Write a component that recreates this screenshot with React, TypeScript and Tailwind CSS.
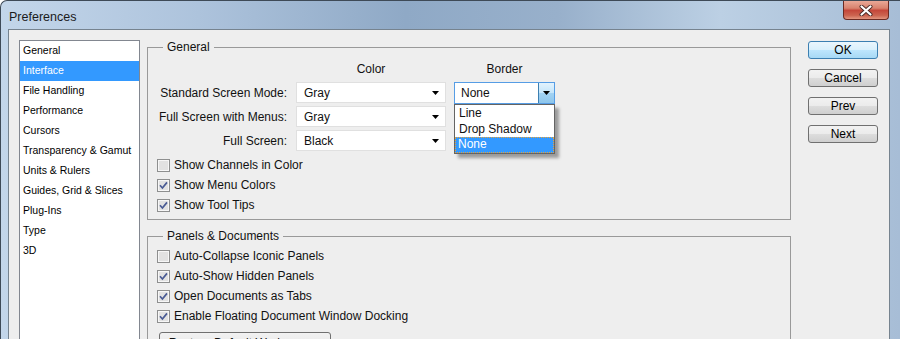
import React from "react";

const categories = [
  "General",
  "Interface",
  "File Handling",
  "Performance",
  "Cursors",
  "Transparency & Gamut",
  "Units & Rulers",
  "Guides, Grid & Slices",
  "Plug-Ins",
  "Type",
  "3D",
];

function Checkbox({ checked }: { checked: boolean }) {
  return (
    <svg width="13" height="13" viewBox="0 0 13 13" className="shrink-0">
      <rect x="0.5" y="0.5" width="12" height="12" fill="#f7f7f7" stroke="#8e8f8f" />
      <rect x="2" y="2" width="9" height="9" fill="#e2e2e2" />
      {checked && (
        <path d="M3 6.3 5.4 9 10 3.4" fill="none" stroke="#4a5b94" strokeWidth="1.7" />
      )}
    </svg>
  );
}

function CheckRow({ label, checked }: { label: string; checked: boolean }) {
  return (
    <div className="flex h-[20px] items-center gap-[4px] pl-[9px]">
      <Checkbox checked={checked} />
      <span>{label}</span>
    </div>
  );
}

function Arrow() {
  return (
    <svg width="7" height="4" viewBox="0 0 7 4" className="shrink-0">
      <path d="M0 0h7L3.5 4z" fill="#000" />
    </svg>
  );
}

function Select({ value }: { value: string }) {
  return (
    <div className="ml-[9px] flex h-[21px] w-[150px] items-center justify-between border border-[#e0e0e0] bg-white pl-[7px] pr-[6px]">
      <span>{value}</span>
      <Arrow />
    </div>
  );
}

function WinButton({ label, primary }: { label: string; primary?: boolean }) {
  return (
    <button
      className={
        primary
          ? "flex h-[18px] w-[70px] items-center justify-center rounded-[3px] border border-[#3c7fb1] bg-[linear-gradient(#eaf6fd_0%,#d9f0fc_50%,#bee6fd_50%,#a7d9f5_100%)] text-[12px] leading-none text-black"
          : "flex h-[18px] w-[70px] items-center justify-center rounded-[3px] border border-[#707070] bg-[linear-gradient(#f2f2f2_0%,#ebebeb_50%,#dddddd_50%,#cfcfcf_100%)] text-[12px] leading-none text-black"
      }
    >
      {label}
    </button>
  );
}

function Label({ children }: { children: React.ReactNode }) {
  return <div className="w-[139px] shrink-0 text-right">{children}</div>;
}

export default function App() {
  return (
    <div className="flex h-[339px] w-[900px] flex-col overflow-hidden rounded-tl-[7px] border-l border-t border-[#3e4a57] bg-[linear-gradient(90deg,#c3d6ea_0%,#adc3dc_22%,#8fa9c6_45%,#98b0cb_62%,#bcd0e4_80%,#a7bdd6_100%)] pl-[7px] pr-[10px] font-['Liberation_Sans',Arial,sans-serif] text-[12px] text-[#111]">
      {/* title bar */}
      <div className="flex h-[28px] shrink-0 items-start">
        <span className="mt-[7px] pl-[1px] text-[12.5px] text-[#1b1b1b]">Preferences</span>
        <div className="ml-auto mr-[1px] flex h-[19px] w-[46px] items-center justify-center rounded-b-[4px] border border-t-0 border-[#6b2a22] bg-[linear-gradient(#e9a897_0%,#d8826e_40%,#c4473a_52%,#cc6450_80%,#e29680_100%)]">
          <svg width="14" height="11" viewBox="0 0 14 11">
            <path d="M2.5 1.5 11.5 9.5M11.5 1.5 2.5 9.5" stroke="#4a2a26" strokeWidth="4" strokeLinecap="round" />
            <path d="M2.5 1.5 11.5 9.5M11.5 1.5 2.5 9.5" stroke="#ffffff" strokeWidth="2.2" strokeLinecap="round" />
          </svg>
        </div>
      </div>

      {/* dialog body */}
      <div className="flex min-h-0 flex-1 border border-b-0 border-[#76838f] bg-[#eeeeee]">
        {/* category list */}
        <div className="ml-[10px] mt-[10px] h-[320px] w-[121px] shrink-0 border border-[#828790] bg-white text-[10.5px]">
          {categories.map((c) => (
            <div
              key={c}
              className={
                c === "Interface"
                  ? "flex h-[20px] items-center bg-[#3399ff] pl-[3px] text-white"
                  : "flex h-[20px] items-center pl-[3px] text-black"
              }
            >
              {c}
            </div>
          ))}
        </div>

        {/* main panels */}
        <div className="ml-[7px] mt-[9px] flex w-[644px] shrink-0 flex-col">
          <fieldset className="border border-[#999999] pb-[4px]">
            <legend className="ml-[15px] px-[4px] text-[12px] leading-[16px]">General</legend>
            <div className="mt-[6px] flex h-[16px] items-center">
              <div className="w-[148px] shrink-0" />
              <div className="w-[150px] text-center">Color</div>
              <div className="ml-[8px] w-[101px] text-center">Border</div>
            </div>
            <div className="mt-[5px] flex flex-col gap-[3px]">
              <div className="flex h-[21px] items-center">
                <Label>Standard Screen Mode:</Label>
                <Select value="Gray" />
                <div className="relative ml-[8px] h-[22px] w-[101px] self-start">
                  <div className="flex h-full items-center border border-[#569de5] bg-white">
                    <span className="flex-1 pl-[6px]">None</span>
                    <div className="flex h-full w-[16px] items-center justify-center border-l border-[#3c7fb1] bg-[linear-gradient(#e3f3fd_0%,#c4e5fa_50%,#a3d3f3_50%,#8ec6ec_100%)]">
                      <Arrow />
                    </div>
                  </div>
                  <div className="absolute left-0 top-[22px] z-10 w-[101px] border border-[#646464] bg-white shadow-[4px_4px_3px_rgba(0,0,0,0.35)]">
                    <div className="h-[16px] pl-[4px] leading-[16px]">Line</div>
                    <div className="h-[16px] pl-[4px] leading-[16px]">Drop Shadow</div>
                    <div className="h-[16px] bg-[#3399ff] pl-[3px] leading-[14px] text-white outline-1 -outline-offset-1 outline-dotted outline-[#e7a33a]">
                      None
                    </div>
                  </div>
                </div>
              </div>
              <div className="flex h-[21px] items-center">
                <Label>Full Screen with Menus:</Label>
                <Select value="Gray" />
              </div>
              <div className="flex h-[21px] items-center">
                <Label>Full Screen:</Label>
                <Select value="Black" />
              </div>
            </div>
            <div className="mt-[4px]">
              <CheckRow label="Show Channels in Color" checked={false} />
              <CheckRow label="Show Menu Colors" checked />
              <CheckRow label="Show Tool Tips" checked />
            </div>
          </fieldset>

          <fieldset className="mt-[8px] border border-[#999999] pb-[20px]">
            <legend className="ml-[15px] px-[4px] text-[12px] leading-[16px]">Panels &amp; Documents</legend>
            <div className="mt-[2px]">
              <CheckRow label="Auto-Collapse Iconic Panels" checked={false} />
              <CheckRow label="Auto-Show Hidden Panels" checked />
              <CheckRow label="Open Documents as Tabs" checked />
              <CheckRow label="Enable Floating Document Window Docking" checked />
            </div>
            <button className="ml-[11px] mt-[6px] flex h-[22px] w-[172px] items-center justify-center rounded-[3px] border border-[#707070] bg-[linear-gradient(#f2f2f2_0%,#ebebeb_50%,#dddddd_50%,#cfcfcf_100%)] text-[12px]">
              Restore Default Workspaces
            </button>
          </fieldset>
        </div>

        {/* buttons */}
        <div className="ml-[17px] mt-[11px] flex flex-col gap-[10px]">
          <WinButton label="OK" primary />
          <WinButton label="Cancel" />
          <WinButton label="Prev" />
          <WinButton label="Next" />
        </div>
      </div>
    </div>
  );
}
